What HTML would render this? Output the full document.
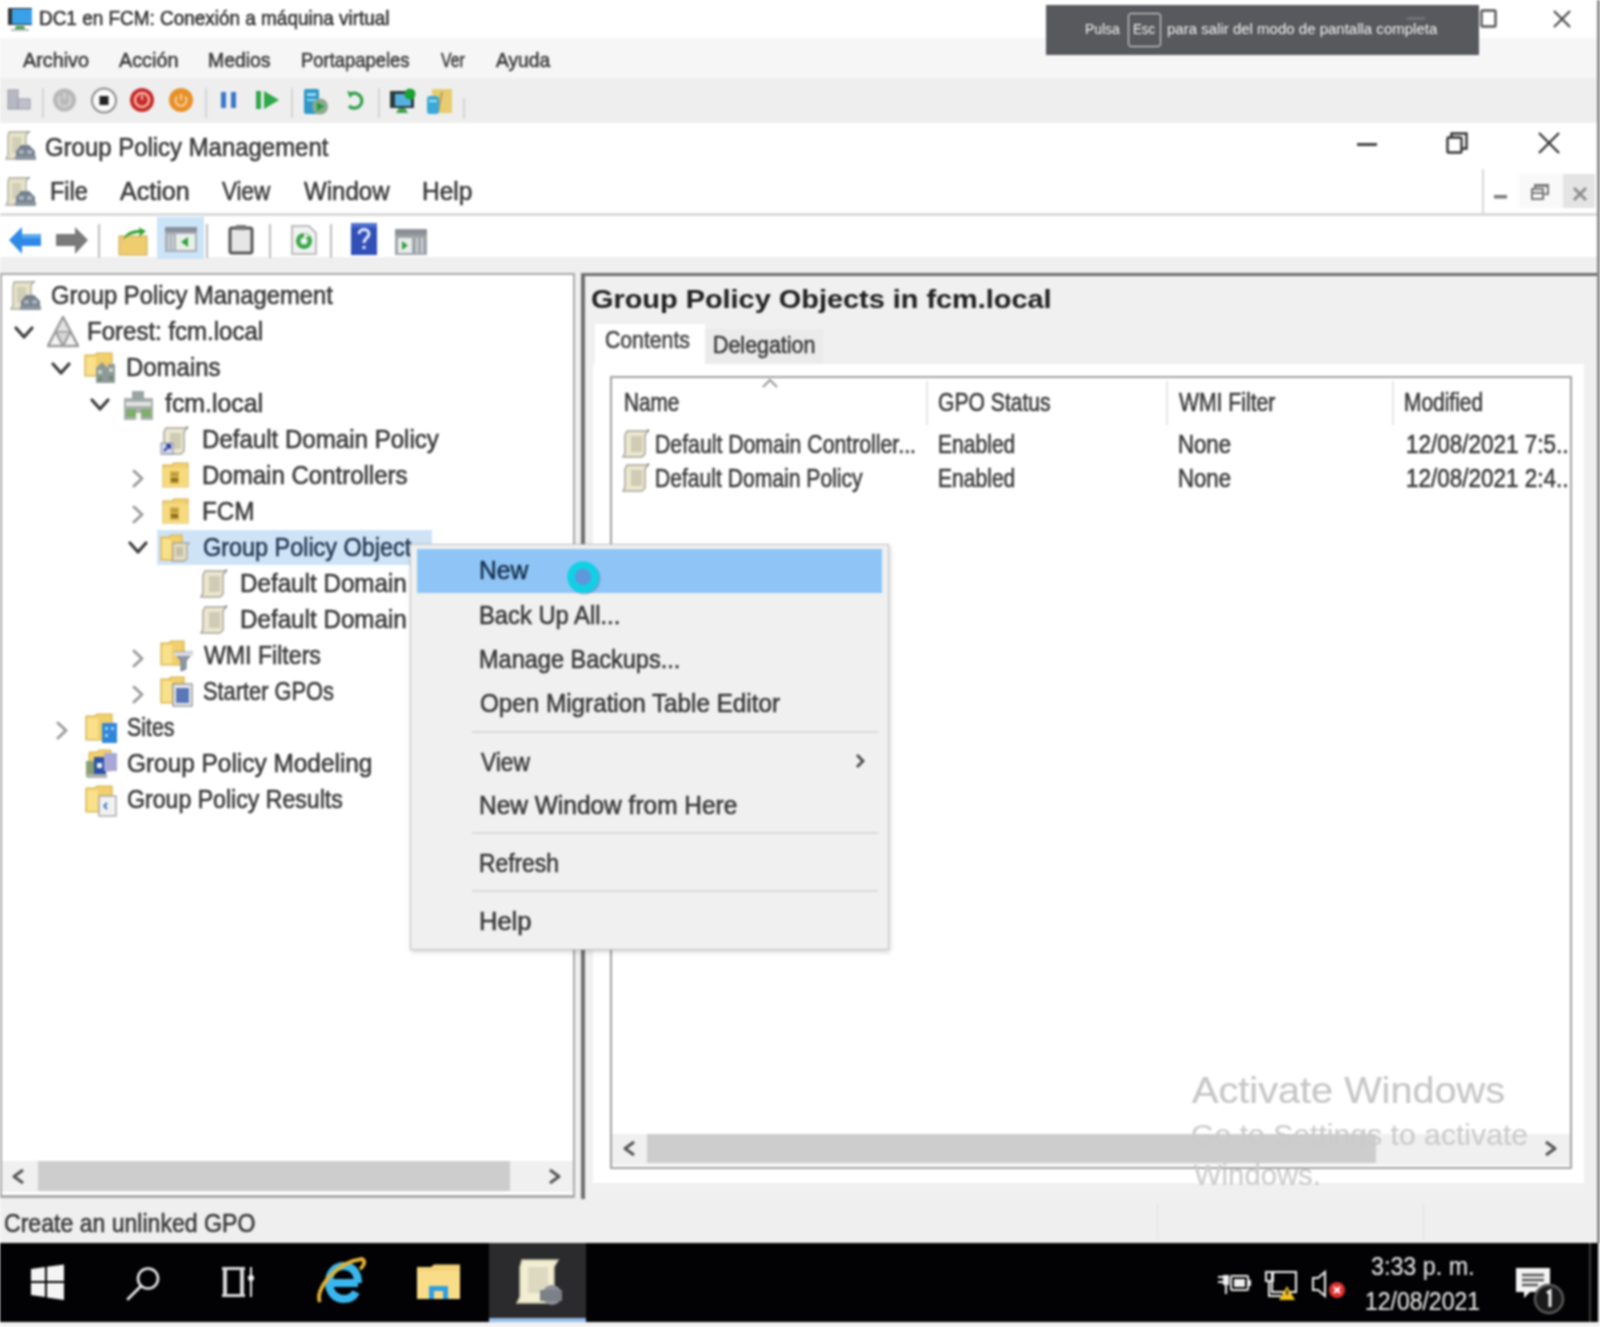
<!DOCTYPE html>
<html><head><meta charset="utf-8"><style>
html,body{margin:0;padding:0;}
body{width:1600px;height:1327px;position:relative;overflow:hidden;background:#fff;font-family:"Liberation Sans",sans-serif;}
.t{position:absolute;white-space:nowrap;line-height:1;transform-origin:0 0;-webkit-text-stroke:0.6px currentColor;}
#root{position:absolute;left:0;top:0;width:1600px;height:1327px;overflow:hidden;filter:blur(0.8px);}
.r{position:absolute;}
</style></head><body><div id="root">
<div class="r" style="left:0px;top:0px;width:1600px;height:38px;background:#ffffff;"></div>
<div class="r" style="left:0px;top:38px;width:1600px;height:40px;background:#f6f6f6;"></div>
<div class="r" style="left:0px;top:78px;width:1600px;height:45px;background:#eeeeee;"></div>
<div class="r" style="left:0px;top:123px;width:1600px;height:90px;background:#ffffff;"></div>
<div class="r" style="left:0px;top:213px;width:1600px;height:3px;background:#d9d9d9;"></div>
<div class="r" style="left:0px;top:216px;width:1600px;height:41px;background:#ffffff;"></div>
<div class="r" style="left:0px;top:257px;width:1600px;height:986px;background:#efefef;"></div>
<div class="r" style="left:0px;top:273px;width:575px;height:925px;background:#a8a8a8;"></div>
<div class="r" style="left:2px;top:275px;width:571px;height:920px;background:#ffffff;"></div>
<div class="r" style="left:2px;top:1161px;width:571px;height:31px;background:#f0f0f0;"></div>
<div class="r" style="left:38px;top:1161px;width:472px;height:30px;background:#cdcdcd;"></div>
<div class="r" style="left:581px;top:273px;width:1019px;height:926px;background:#6f6f6f;"></div>
<div class="r" style="left:585px;top:276px;width:1012px;height:923px;background:#f0f0f0;"></div>
<div class="r" style="left:593px;top:364px;width:991px;height:819px;background:#ffffff;"></div>
<div class="r" style="left:595px;top:324px;width:110px;height:42px;background:#ffffff;"></div>
<div class="r" style="left:705px;top:329px;width:118px;height:35px;background:#ebebeb;"></div>
<div class="r" style="left:610px;top:376px;width:962px;height:793px;background:#a0a0a0;"></div>
<div class="r" style="left:612px;top:378px;width:958px;height:789px;background:#ffffff;"></div>
<div class="r" style="left:612px;top:1134px;width:958px;height:31px;background:#f0f0f0;"></div>
<div class="r" style="left:647px;top:1134px;width:729px;height:29px;background:#cdcdcd;"></div>
<div class="r" style="left:926px;top:381px;width:2px;height:44px;background:#e5e5e5;"></div>
<div class="r" style="left:1166px;top:381px;width:2px;height:44px;background:#e5e5e5;"></div>
<div class="r" style="left:1392px;top:381px;width:2px;height:44px;background:#e5e5e5;"></div>
<div class="r" style="left:1157px;top:1203px;width:1px;height:37px;background:#e0e0e0;"></div>
<div class="r" style="left:1423px;top:1203px;width:1px;height:37px;background:#e0e0e0;"></div>
<div class="r" style="left:0px;top:1243px;width:1598px;height:79px;background:#020204;"></div>
<div class="r" style="left:1598px;top:1243px;width:2px;height:79px;background:#dcdcdc;"></div>
<div class="r" style="left:489px;top:1243px;width:97px;height:79px;background:#2b2b2d;"></div>
<div class="r" style="left:489px;top:1318px;width:97px;height:4px;background:#92bde6;"></div>
<div class="r" style="left:0px;top:1322px;width:1600px;height:5px;background:#f2f2f2;"></div>
<div class="r" style="left:1597px;top:0px;width:3px;height:1243px;background:#8a8a8a;"></div>
<div class="r" style="left:1589px;top:1243px;width:2px;height:79px;background:#3a3a3a;"></div>
<div class="r" style="left:157px;top:530px;width:275px;height:35px;background:#cfe3f6;"></div>
<svg class="r" style="left:7px;top:7px" width="26" height="25" viewBox="0 0 26 25"><rect x="1" y="1" width="24" height="17" fill="#2a2a2a"/><rect x="5" y="2" width="20" height="15" fill="#3aa0e8"/><rect x="1" y="1" width="4" height="17" fill="#333"/><path d="M9 19 H17 L19 24 H7 Z" fill="#3aa04a"/><rect x="4" y="22" width="18" height="2" fill="#b8b8b8"/></svg>
<svg class="r" style="left:7px;top:89px" width="25" height="21" viewBox="0 0 25 21"><rect x="1" y="1" width="10" height="19" fill="#b8b8c4" stroke="#9898a4"/><rect x="11" y="10" width="12" height="10" fill="#c0c0cc" stroke="#9898a4"/></svg><svg class="r" style="left:42px;top:88px" width="2" height="30" viewBox="0 0 2 30"><rect width="2" height="30" fill="#d4d4d4"/></svg><svg class="r" style="left:52px;top:88px" width="25" height="25" viewBox="0 0 25 25"><circle cx="12.5" cy="12" r="11.5" fill="#b9b9b9"/><path d="M8.5 8 A6 6 0 1 0 16.5 8" fill="none" stroke="#d8d8d8" stroke-width="2"/><path d="M12.5 5 V11" stroke="#d8d8d8" stroke-width="2"/></svg><svg class="r" style="left:90px;top:87px" width="28" height="28" viewBox="0 0 28 28"><circle cx="14" cy="13.5" r="12" fill="#fafafa" stroke="#8a8a8a" stroke-width="2"/><rect x="9.5" y="9" width="9" height="9" fill="#222"/></svg><svg class="r" style="left:129px;top:87px" width="26" height="26" viewBox="0 0 26 26"><circle cx="13" cy="13" r="12" fill="#c62a2a"/><circle cx="13" cy="13" r="7" fill="none" stroke="#f4b0a0" stroke-width="2.5"/><path d="M13 8 V13" stroke="#f4b0a0" stroke-width="2"/></svg><svg class="r" style="left:168px;top:87px" width="26" height="26" viewBox="0 0 26 26"><circle cx="13" cy="13" r="12" fill="#e8902a"/><path d="M9 9.5 A5.5 5.5 0 1 0 17 9.5" fill="none" stroke="#f8d090" stroke-width="2"/><path d="M13 7 V13" stroke="#f8d090" stroke-width="2"/></svg><svg class="r" style="left:205px;top:88px" width="2" height="30" viewBox="0 0 2 30"><rect width="2" height="30" fill="#d4d4d4"/></svg><svg class="r" style="left:220px;top:91px" width="18" height="18" viewBox="0 0 18 18"><rect x="1" y="1" width="5" height="16" fill="#3a78c8"/><rect x="11" y="1" width="5" height="16" fill="#3a78c8"/></svg><svg class="r" style="left:255px;top:89px" width="26" height="22" viewBox="0 0 26 22"><rect x="1" y="2" width="5" height="18" fill="#2ea84a"/><path d="M9 2 L24 11 L9 20 Z" fill="#2ea84a"/></svg><svg class="r" style="left:291px;top:88px" width="2" height="30" viewBox="0 0 2 30"><rect width="2" height="30" fill="#d4d4d4"/></svg><svg class="r" style="left:303px;top:88px" width="26" height="28" viewBox="0 0 26 28"><rect x="1" y="1" width="15" height="25" rx="2" fill="#2d98c8"/><rect x="4" y="5" width="9" height="3" fill="#9ad8f0"/><rect x="4" y="11" width="9" height="2" fill="#9ad8f0"/><circle cx="17" cy="18.5" r="8" fill="#8aa890"/><path d="M14 14 L21 18.5 L14 23 Z" fill="#1e9a3a"/></svg><svg class="r" style="left:345px;top:89px" width="20" height="22" viewBox="0 0 20 22"><path d="M6 5 A7.5 7.5 0 1 1 4 17" fill="none" stroke="#2ea04a" stroke-width="3.2"/><path d="M2 2 L9 4 L5 9 Z" fill="#2ea04a"/></svg><svg class="r" style="left:378px;top:88px" width="2" height="30" viewBox="0 0 2 30"><rect width="2" height="30" fill="#d4d4d4"/></svg><svg class="r" style="left:389px;top:88px" width="27" height="26" viewBox="0 0 27 26"><rect x="1" y="3" width="24" height="17" fill="#2b3a3a"/><rect x="6" y="6" width="16" height="12" fill="#58b0e0"/><path d="M10 20 H16 L19 25 H7 Z" fill="#40a050"/><circle cx="21" cy="6" r="5.5" fill="#18a030"/></svg><svg class="r" style="left:425px;top:88px" width="28" height="27" viewBox="0 0 28 27"><rect x="7" y="1" width="20" height="24" fill="#e8cc70"/><path d="M17 4 L13 24" stroke="#b0a060" stroke-width="2"/><rect x="2" y="8" width="12" height="18" rx="3" fill="#3aa8d8"/><rect x="4" y="12" width="8" height="2" fill="#a8e0f0"/></svg><svg class="r" style="left:463px;top:98px" width="2" height="21" viewBox="0 0 2 21"><rect width="2" height="21" fill="#d4d4d4"/></svg>
<svg class="r" style="left:1480px;top:9px" width="18" height="20" viewBox="0 0 18 20"><rect x="1.5" y="1.5" width="14" height="16" rx="1" fill="none" stroke="#555" stroke-width="2.4"/></svg><svg class="r" style="left:1552px;top:9px" width="20" height="20" viewBox="0 0 20 20"><path d="M2 2 L18 18 M18 2 L2 18" stroke="#444" stroke-width="2"/></svg>
<svg class="r" style="left:4px;top:131px" width="32" height="30" viewBox="0 0 32 30"><path d="M5 1 H24 L22 5 V24 L19 28 H2 L4 24 V5 Z" fill="#e6e3c8" stroke="#aaa89c" stroke-width="1.3"/><path d="M23 1 l3 -0.5" stroke="#999" stroke-width="2"/><rect x="8" y="6" width="9" height="16" fill="#d2cfb8"/><path d="M12 29 V20 L17 14 H25 L31 20 V29 Z" fill="#75818e"/><rect x="15" y="19" width="5" height="4" fill="#a9b3bd"/><rect x="23" y="19" width="5" height="4" fill="#a9b3bd"/><rect x="11" y="25" width="21" height="4" fill="#8c96a0"/></svg>
<svg class="r" style="left:4px;top:177px" width="32" height="30" viewBox="0 0 32 30"><path d="M5 1 H24 L22 5 V24 L19 28 H2 L4 24 V5 Z" fill="#e6e3c8" stroke="#aaa89c" stroke-width="1.3"/><path d="M23 1 l3 -0.5" stroke="#999" stroke-width="2"/><rect x="8" y="6" width="9" height="16" fill="#d2cfb8"/><path d="M12 29 V20 L17 14 H25 L31 20 V29 Z" fill="#75818e"/><rect x="15" y="19" width="5" height="4" fill="#a9b3bd"/><rect x="23" y="19" width="5" height="4" fill="#a9b3bd"/><rect x="11" y="25" width="21" height="4" fill="#8c96a0"/></svg>
<svg class="r" style="left:1356px;top:142px" width="22" height="5" viewBox="0 0 22 5"><rect x="1" y="1" width="20" height="3" fill="#444"/></svg><svg class="r" style="left:1446px;top:131px" width="23" height="24" viewBox="0 0 23 24"><rect x="1.5" y="6.5" width="14" height="15" rx="1" fill="none" stroke="#333" stroke-width="2.4"/><path d="M5.5 6.5 V2.5 H20.5 V17.5 H15.5" fill="none" stroke="#333" stroke-width="2.4"/></svg><svg class="r" style="left:1537px;top:131px" width="24" height="24" viewBox="0 0 24 24"><path d="M2 2 L22 22 M22 2 L2 22" stroke="#333" stroke-width="2.3"/></svg><svg class="r" style="left:1482px;top:169px" width="2" height="46" viewBox="0 0 2 46"><rect width="2" height="46" fill="#d8d8d8"/></svg><svg class="r" style="left:1519px;top:174px" width="44" height="34" viewBox="0 0 44 34"><rect width="44" height="34" fill="#f9f9f9"/></svg><svg class="r" style="left:1563px;top:174px" width="32" height="34" viewBox="0 0 32 34"><rect width="32" height="34" fill="#e4e4e4"/></svg><svg class="r" style="left:1494px;top:195px" width="13" height="4" viewBox="0 0 13 4"><rect x="0" y="0" width="13" height="3.5" fill="#7a7a7a"/></svg><svg class="r" style="left:1531px;top:183px" width="19" height="18" viewBox="0 0 19 18"><rect x="1" y="6" width="11" height="10" fill="none" stroke="#777" stroke-width="2"/><rect x="1" y="9" width="11" height="2" fill="#777"/><path d="M4 6 V2 H17 V11 H12" fill="none" stroke="#777" stroke-width="2"/><rect x="4" y="2" width="13" height="2" fill="#777"/></svg><svg class="r" style="left:1572px;top:186px" width="16" height="16" viewBox="0 0 16 16"><path d="M2 2 L14 14 M14 2 L2 14" stroke="#8a8a8a" stroke-width="2.8"/></svg>
<svg class="r" style="left:8px;top:225px" width="35" height="31" viewBox="0 0 35 31"><path d="M1 15 L14 2 V9 H33 V21 H14 V29 Z" fill="#2f8ae6"/><path d="M14 9 H33 V13 H14 Z" fill="#5aaaf0"/></svg><svg class="r" style="left:54px;top:225px" width="35" height="31" viewBox="0 0 35 31"><path d="M34 15 L21 2 V9 H2 V21 H21 V29 Z" fill="#7a7a7a"/></svg><svg class="r" style="left:98px;top:224px" width="2" height="34" viewBox="0 0 2 34"><rect width="2" height="34" fill="#bdbdbd"/></svg><svg class="r" style="left:118px;top:226px" width="31" height="31" viewBox="0 0 31 31"><rect x="1" y="10" width="28" height="19" fill="#f0cc70" stroke="#c8a850" stroke-width="1"/><path d="M5 14 C8 6 14 4 22 4 L20 1 L28 5 L21 11 L22 7 C15 7 10 9 5 14Z" fill="#30a030"/></svg><svg class="r" style="left:157px;top:217px" width="47" height="42" viewBox="0 0 47 42"><rect width="47" height="42" fill="#cce4f7"/><rect x="8" y="10" width="32" height="25" fill="#a8aeb8"/><rect x="8" y="10" width="32" height="5" fill="#8a909a"/><rect x="19" y="17" width="19" height="16" fill="#e8f0e8"/><path d="M31 20 L24 25 L31 30 Z" fill="#30a040"/><rect x="11" y="18" width="2" height="15" fill="#d0d4d8"/><rect x="15" y="18" width="2" height="15" fill="#d0d4d8"/></svg><svg class="r" style="left:206px;top:224px" width="2" height="34" viewBox="0 0 2 34"><rect width="2" height="34" fill="#bdbdbd"/></svg><svg class="r" style="left:228px;top:224px" width="27" height="31" viewBox="0 0 27 31"><rect x="2" y="4" width="22" height="25" rx="2" fill="#e6e6e6" stroke="#555" stroke-width="3"/><rect x="8" y="1" width="10" height="5" fill="#777"/></svg><svg class="r" style="left:269px;top:224px" width="2" height="34" viewBox="0 0 2 34"><rect width="2" height="34" fill="#bdbdbd"/></svg><svg class="r" style="left:290px;top:224px" width="28" height="32" viewBox="0 0 28 32"><path d="M2 2 H19 L26 9 V30 H2 Z" fill="#f2f2f2" stroke="#a8a8a8" stroke-width="1.5"/><circle cx="14" cy="17" r="8" fill="#3aa848"/><circle cx="14" cy="17" r="3.5" fill="#f2f2f2"/><path d="M14 9 L20 12 L14 14Z" fill="#f2f2f2"/></svg><svg class="r" style="left:330px;top:224px" width="2" height="34" viewBox="0 0 2 34"><rect width="2" height="34" fill="#bdbdbd"/></svg><svg class="r" style="left:350px;top:222px" width="28" height="34" viewBox="0 0 28 34"><rect x="1" y="1" width="26" height="32" fill="#3250b8"/><rect x="1" y="1" width="26" height="4" fill="#5070d0"/><path d="M9 12 C9 6 19 6 19 12 C19 16 14 16 14 21" fill="none" stroke="#e0e8ff" stroke-width="3"/><rect x="12.5" y="24" width="3" height="3" fill="#e0e8ff"/></svg><svg class="r" style="left:394px;top:228px" width="34" height="28" viewBox="0 0 34 28"><rect x="1" y="1" width="32" height="26" fill="#a0a4aa"/><rect x="1" y="1" width="32" height="6" fill="#8c9096"/><rect x="4" y="10" width="14" height="15" fill="#e8ece8"/><path d="M8 13 L14 17.5 L8 22 Z" fill="#30a040"/><rect x="22" y="10" width="2" height="15" fill="#d0d4d8"/><rect x="27" y="10" width="2" height="15" fill="#d0d4d8"/></svg>
<svg class="r" style="left:9px;top:281px" width="32" height="30" viewBox="0 0 32 30"><path d="M5 1 H24 L22 5 V24 L19 28 H2 L4 24 V5 Z" fill="#e6e3c8" stroke="#aaa89c" stroke-width="1.3"/><path d="M23 1 l3 -0.5" stroke="#999" stroke-width="2"/><rect x="8" y="6" width="9" height="16" fill="#d2cfb8"/><path d="M12 29 V20 L17 14 H25 L31 20 V29 Z" fill="#75818e"/><rect x="15" y="19" width="5" height="4" fill="#a9b3bd"/><rect x="23" y="19" width="5" height="4" fill="#a9b3bd"/><rect x="11" y="25" width="21" height="4" fill="#8c96a0"/></svg>
<svg class="r" style="left:13px;top:325px" width="22" height="16" viewBox="0 0 22 16"><path d="M3 3 L11.0 12 L19 3" fill="none" stroke="#3c3c3c" stroke-width="3.2" stroke-linecap="round" stroke-linejoin="round"/></svg>
<svg class="r" style="left:47px;top:315px" width="32" height="33" viewBox="0 0 32 33"><path d="M16 2 L31 31 H1 Z" fill="#f4f4f4" stroke="#9c9c9c" stroke-width="2.6" stroke-linejoin="round"/><path d="M8.5 16.5 H23.5 L16 31 Z" fill="#d6d6d6" stroke="#9c9c9c" stroke-width="2.2" stroke-linejoin="round"/><path d="M16 6 L22 16 H10 Z" fill="#e2e2e2"/></svg>
<svg class="r" style="left:50px;top:361px" width="22" height="16" viewBox="0 0 22 16"><path d="M3 3 L11.0 12 L19 3" fill="none" stroke="#3c3c3c" stroke-width="3.2" stroke-linecap="round" stroke-linejoin="round"/></svg>
<svg class="r" style="left:84px;top:352px" width="33" height="32" viewBox="0 0 33 32"><path d="M1 3 H11 L13 1 H28 V24 H1 Z" fill="#f1cf6a" stroke="#d2b050" stroke-width="1.2"/><rect x="2" y="5" width="10" height="18" fill="#f9e08a"/><path d="M12 31 V16 L18 10 L24 16 V12 H31 V31 Z" fill="#8e9a98"/><rect x="14" y="18" width="4" height="4" fill="#c8d0c8"/><rect x="25" y="16" width="4" height="4" fill="#c8d0c8"/><rect x="14" y="25" width="4" height="4" fill="#6d8c70"/><rect x="25" y="24" width="4" height="4" fill="#6d8c70"/></svg>
<svg class="r" style="left:89px;top:397px" width="22" height="16" viewBox="0 0 22 16"><path d="M3 3 L11.0 12 L19 3" fill="none" stroke="#3c3c3c" stroke-width="3.2" stroke-linecap="round" stroke-linejoin="round"/></svg>
<svg class="r" style="left:123px;top:389px" width="31" height="31" viewBox="0 0 31 31"><rect x="1" y="9" width="29" height="22" fill="#a9b0ae"/><rect x="9" y="2" width="12" height="9" fill="#9aa4a2"/><rect x="3" y="13" width="25" height="4" fill="#e1e6e2"/><rect x="3" y="20" width="10" height="8" fill="#7fae6b"/><rect x="18" y="20" width="10" height="8" fill="#7fae6b"/><rect x="13" y="24" width="5" height="7" fill="#f4f4f4"/></svg>
<svg class="r" style="left:160px;top:426px" width="30" height="30" viewBox="0 0 30 30"><path d="M6 2 H27 L24 6 V25 L21 28 H2 L4 24 V6 Z" fill="#ebe7cf" stroke="#a6a49a" stroke-width="1.5"/><rect x="10" y="7" width="11" height="16" fill="#cfcbb5"/><path d="M26 2 l2 -1" stroke="#888" stroke-width="2"/><rect x="1" y="17" width="12" height="11" fill="#d3d8e6" stroke="#8890a8" stroke-width="1"/><path d="M4 25 L10 19 M6 19 H10 V23" stroke="#2a3aa0" stroke-width="2" fill="none"/></svg>
<svg class="r" style="left:131px;top:468px" width="15" height="21" viewBox="0 0 15 21"><path d="M3 3 L11 10.5 L3 18" fill="none" stroke="#9c9c9c" stroke-width="3" stroke-linecap="round" stroke-linejoin="round"/></svg>
<svg class="r" style="left:162px;top:461px" width="28" height="27" viewBox="0 0 28 27"><path d="M1 4 H10 L12 2 H26 V26 H1 Z" fill="#f1d06e" stroke="#d0ad4f" stroke-width="1.2"/><rect x="1" y="7" width="25" height="19" fill="#f6da7e"/><rect x="8" y="10" width="9" height="13" fill="#d9b34a"/><rect x="9" y="17" width="7" height="4" fill="#8a7020"/><rect x="9" y="12" width="7" height="3" fill="#b79a3a"/></svg>
<svg class="r" style="left:131px;top:504px" width="15" height="21" viewBox="0 0 15 21"><path d="M3 3 L11 10.5 L3 18" fill="none" stroke="#9c9c9c" stroke-width="3" stroke-linecap="round" stroke-linejoin="round"/></svg>
<svg class="r" style="left:162px;top:497px" width="28" height="27" viewBox="0 0 28 27"><path d="M1 4 H10 L12 2 H26 V26 H1 Z" fill="#f1d06e" stroke="#d0ad4f" stroke-width="1.2"/><rect x="1" y="7" width="25" height="19" fill="#f6da7e"/><rect x="8" y="10" width="9" height="13" fill="#d9b34a"/><rect x="9" y="17" width="7" height="4" fill="#8a7020"/><rect x="9" y="12" width="7" height="3" fill="#b79a3a"/></svg>
<svg class="r" style="left:127px;top:540px" width="22" height="16" viewBox="0 0 22 16"><path d="M3 3 L11.0 12 L19 3" fill="none" stroke="#3c3c3c" stroke-width="3.2" stroke-linecap="round" stroke-linejoin="round"/></svg>
<svg class="r" style="left:160px;top:534px" width="31" height="28" viewBox="0 0 31 28"><path d="M1 3 H9 L11 1 H22 V26 H1 Z" fill="#f1cf6a" stroke="#d2b050" stroke-width="1.2"/><rect x="2" y="5" width="9" height="20" fill="#f9e08a"/><path d="M13 9 H29 L27 12 V25 L24 27 H12 L13 24 Z" fill="#e2dcc0" stroke="#a6a49a" stroke-width="1.3"/><rect x="16" y="13" width="7" height="9" fill="#c4bfa8"/></svg>
<svg class="r" style="left:199px;top:569px" width="30" height="30" viewBox="0 0 30 30"><path d="M6 2 H27 L24 6 V25 L21 28 H2 L4 24 V6 Z" fill="#ebe7cf" stroke="#a6a49a" stroke-width="1.5"/><rect x="10" y="7" width="11" height="16" fill="#cfcbb5"/><path d="M26 2 l2 -1" stroke="#888" stroke-width="2"/></svg>
<svg class="r" style="left:199px;top:605px" width="30" height="30" viewBox="0 0 30 30"><path d="M6 2 H27 L24 6 V25 L21 28 H2 L4 24 V6 Z" fill="#ebe7cf" stroke="#a6a49a" stroke-width="1.5"/><rect x="10" y="7" width="11" height="16" fill="#cfcbb5"/><path d="M26 2 l2 -1" stroke="#888" stroke-width="2"/></svg>
<svg class="r" style="left:131px;top:648px" width="15" height="21" viewBox="0 0 15 21"><path d="M3 3 L11 10.5 L3 18" fill="none" stroke="#9c9c9c" stroke-width="3" stroke-linecap="round" stroke-linejoin="round"/></svg>
<svg class="r" style="left:160px;top:640px" width="34" height="32" viewBox="0 0 34 32"><path d="M1 3 H9 L11 1 H24 V25 H1 Z" fill="#f1cf6a" stroke="#d2b050" stroke-width="1.2"/><rect x="2" y="5" width="10" height="19" fill="#f9e08a"/><path d="M14 12 H33 L26 21 V29 L21 31 V21 Z" fill="#8d98a8" stroke="#6c7585" stroke-width="1"/><rect x="14" y="12" width="19" height="4" fill="#d8dde4"/></svg>
<svg class="r" style="left:131px;top:684px" width="15" height="21" viewBox="0 0 15 21"><path d="M3 3 L11 10.5 L3 18" fill="none" stroke="#9c9c9c" stroke-width="3" stroke-linecap="round" stroke-linejoin="round"/></svg>
<svg class="r" style="left:160px;top:676px" width="33" height="31" viewBox="0 0 33 31"><path d="M1 3 H9 L11 1 H24 V27 H1 Z" fill="#f1cf6a" stroke="#d2b050" stroke-width="1.2"/><rect x="2" y="5" width="10" height="21" fill="#f9e08a"/><rect x="13" y="8" width="19" height="22" fill="#e8e8e8" stroke="#8a8f98" stroke-width="1.3"/><rect x="16" y="12" width="13" height="15" fill="#5a78b8"/></svg>
<svg class="r" style="left:55px;top:720px" width="15" height="21" viewBox="0 0 15 21"><path d="M3 3 L11 10.5 L3 18" fill="none" stroke="#9c9c9c" stroke-width="3" stroke-linecap="round" stroke-linejoin="round"/></svg>
<svg class="r" style="left:85px;top:713px" width="33" height="30" viewBox="0 0 33 30"><path d="M1 3 H10 L12 1 H27 V27 H1 Z" fill="#f1cf6a" stroke="#d2b050" stroke-width="1.2"/><rect x="2" y="5" width="11" height="21" fill="#f9e08a"/><rect x="17" y="10" width="15" height="20" fill="#2f86d8"/><rect x="20" y="14" width="3" height="3" fill="#9fd0f8"/><rect x="26" y="14" width="3" height="3" fill="#9fd0f8"/><rect x="20" y="21" width="3" height="3" fill="#9fd0f8"/></svg>
<svg class="r" style="left:85px;top:749px" width="33" height="30" viewBox="0 0 33 30"><path d="M4 3 H12 L14 1 H26 V22 H4 Z" fill="#f1cf6a" stroke="#d2b050" stroke-width="1"/><rect x="1" y="12" width="10" height="16" fill="#8aa070"/><rect x="9" y="8" width="12" height="20" fill="#2a52a8"/><rect x="19" y="4" width="13" height="18" fill="#a8a8d8"/><rect x="12" y="14" width="5" height="5" fill="#f0f0f0"/><rect x="2" y="25" width="20" height="4" fill="#b0b0b0"/></svg>
<svg class="r" style="left:85px;top:785px" width="33" height="32" viewBox="0 0 33 32"><path d="M1 3 H10 L12 1 H27 V27 H1 Z" fill="#f1cf6a" stroke="#d2b050" stroke-width="1.2"/><rect x="2" y="5" width="11" height="21" fill="#f9e08a"/><rect x="14" y="11" width="17" height="20" fill="#f2f2f2" stroke="#a0a0a8" stroke-width="1.3"/><path d="M19 21 L22 18 M19 21 L22 24" stroke="#4070c0" stroke-width="2"/></svg>
<svg class="r" style="left:10px;top:1167px" width="17" height="19" viewBox="0 0 17 19"><path d="M13 3 L4 9.5 L13 16" fill="none" stroke="#555" stroke-width="3" stroke-linejoin="round"/></svg>
<svg class="r" style="left:546px;top:1167px" width="17" height="19" viewBox="0 0 17 19"><path d="M4 3 L13 9.5 L4 16" fill="none" stroke="#555" stroke-width="3" stroke-linejoin="round"/></svg>
<svg class="r" style="left:621px;top:1139px" width="17" height="19" viewBox="0 0 17 19"><path d="M13 3 L4 9.5 L13 16" fill="none" stroke="#555" stroke-width="3" stroke-linejoin="round"/></svg>
<svg class="r" style="left:1542px;top:1139px" width="17" height="19" viewBox="0 0 17 19"><path d="M4 3 L13 9.5 L4 16" fill="none" stroke="#555" stroke-width="3" stroke-linejoin="round"/></svg>
<svg class="r" style="left:760px;top:377px" width="20" height="13" viewBox="0 0 20 13"><path d="M3 10 L10 3 L17 10" fill="none" stroke="#999" stroke-width="2"/></svg>
<svg class="r" style="left:621px;top:429px" width="30" height="30" viewBox="0 0 30 30"><path d="M6 2 H27 L24 6 V25 L21 28 H2 L4 24 V6 Z" fill="#ebe7cf" stroke="#a6a49a" stroke-width="1.5"/><rect x="10" y="7" width="11" height="16" fill="#cfcbb5"/><path d="M26 2 l2 -1" stroke="#888" stroke-width="2"/></svg>
<svg class="r" style="left:621px;top:463px" width="30" height="30" viewBox="0 0 30 30"><path d="M6 2 H27 L24 6 V25 L21 28 H2 L4 24 V6 Z" fill="#ebe7cf" stroke="#a6a49a" stroke-width="1.5"/><rect x="10" y="7" width="11" height="16" fill="#cfcbb5"/><path d="M26 2 l2 -1" stroke="#888" stroke-width="2"/></svg>
<svg class="r" style="left:30px;top:1264px" width="35" height="37" viewBox="0 0 35 37"><path d="M1 5 L15 3 V17 H1 Z M17 2.7 L34 0.5 V17 H17 Z M1 19 H15 V33 L1 31 Z M17 19 H34 V36 L17 33.5 Z" fill="#f4f4f4"/></svg><svg class="r" style="left:125px;top:1264px" width="38" height="38" viewBox="0 0 38 38"><circle cx="23" cy="14.5" r="10" fill="none" stroke="#e8e8e8" stroke-width="2.6"/><path d="M16 22 L3 35" stroke="#e8e8e8" stroke-width="2.8" stroke-linecap="round"/></svg><svg class="r" style="left:221px;top:1266px" width="36" height="33" viewBox="0 0 36 33"><rect x="1" y="1" width="23" height="3" fill="#d8d8d8"/><rect x="1" y="28" width="23" height="3" fill="#d8d8d8"/><rect x="2" y="4" width="4" height="24" fill="#d8d8d8"/><rect x="19" y="4" width="4" height="24" fill="#d8d8d8"/><rect x="29" y="1" width="2" height="30" fill="#ececec"/><circle cx="30" cy="12" r="3" fill="#f4f4f4"/></svg><svg class="r" style="left:314px;top:1254px" width="52" height="52" viewBox="0 0 52 52"><path d="M16 29 H44 M44 29 C44 17 37 12 30 12 C21 12 15 19 15 28 C15 38 21 45 30 45 C36 45 40 42 42 38" fill="none" stroke="#3ab6ee" stroke-width="8"/><path d="M6 48 C0 36 22 8 48 5 C52 7 50 12 46 15" fill="none" stroke="#e3b234" stroke-width="3.8"/></svg><svg class="r" style="left:416px;top:1264px" width="46" height="38" viewBox="0 0 46 38"><path d="M1 3 H15 L18 0.5 H44 V35 H1 Z" fill="#f3d37a"/><rect x="1" y="7" width="43" height="28" fill="#f8dc88"/><rect x="13" y="22" width="19" height="13" fill="#2f9fe0"/><rect x="18" y="27" width="9" height="8" fill="#f8dc88"/></svg><svg class="r" style="left:514px;top:1257px" width="50" height="52" viewBox="0 0 50 52"><path d="M8 3 H44 L40 10 V40 L36 46 H3 L6 40 V10 Z" fill="#f2eed4" stroke="#c8c4a8" stroke-width="1.5"/><rect x="14" y="10" width="20" height="26" fill="#ddd9c0"/><circle cx="38" cy="38" r="10" fill="#8c9098"/><rect x="26" y="33" width="22" height="11" fill="#7c8088"/></svg><svg class="r" style="left:1216px;top:1271px" width="36" height="25" viewBox="0 0 36 25"><path d="M2 6 H7 M2 11 H7" stroke="#eee" stroke-width="2"/><rect x="7" y="4" width="6" height="10" fill="#eee"/><path d="M10 14 V23" stroke="#eee" stroke-width="2"/><rect x="15" y="5" width="17" height="14" rx="1" fill="none" stroke="#eee" stroke-width="2"/><rect x="18" y="8" width="11" height="8" fill="#eee"/><rect x="32" y="9" width="3" height="6" fill="#eee"/></svg><svg class="r" style="left:1263px;top:1269px" width="36" height="33" viewBox="0 0 36 33"><rect x="9" y="3" width="24" height="20" fill="none" stroke="#eee" stroke-width="2"/><rect x="3" y="3" width="7" height="9" fill="none" stroke="#eee" stroke-width="2"/><path d="M6 12 V27 H18" fill="none" stroke="#eee" stroke-width="2"/><path d="M24 17 L32 31 H16 Z" fill="#f0c020"/><rect x="23.3" y="21" width="1.6" height="5" fill="#222"/></svg><svg class="r" style="left:1310px;top:1269px" width="40" height="32" viewBox="0 0 40 32"><path d="M3 9 H8 L15 3 V27 L8 21 H3 Z" fill="none" stroke="#eee" stroke-width="2"/><circle cx="27" cy="21" r="8" fill="#e03030"/><path d="M24 18 L30 24 M30 18 L24 24" stroke="#fff" stroke-width="2"/></svg><svg class="r" style="left:1514px;top:1266px" width="52" height="50" viewBox="0 0 52 50"><path d="M2 2 H36 V26 H16 L10 32 V26 H2 Z" fill="#f4f4f4"/><path d="M8 9 H30 M8 14 H30 M8 19 H24" stroke="#555" stroke-width="2.4"/><circle cx="35" cy="33" r="14" fill="#1a1a1a" stroke="#5a5a5a" stroke-width="2.5"/><path d="M33 27 L36 25 V41" stroke="#f0f0f0" stroke-width="3" fill="none"/></svg>
<div class="t" style="left:39.10px;top:7.45px;font-size:21px;font-weight:normal;color:#333;transform:scaleX(0.9018);">DC1 en FCM: Conexión a máquina virtual</div>
<div class="t" style="left:23.00px;top:49.35px;font-size:21px;font-weight:normal;color:#3c3c3c;transform:scaleX(0.9420);">Archivo</div>
<div class="t" style="left:119.00px;top:49.35px;font-size:21px;font-weight:normal;color:#3c3c3c;transform:scaleX(0.9435);">Acción</div>
<div class="t" style="left:208.08px;top:49.35px;font-size:21px;font-weight:normal;color:#3c3c3c;transform:scaleX(0.9242);">Medios</div>
<div class="t" style="left:301.12px;top:49.35px;font-size:21px;font-weight:normal;color:#3c3c3c;transform:scaleX(0.8770);">Portapapeles</div>
<div class="t" style="left:441.00px;top:49.35px;font-size:21px;font-weight:normal;color:#3c3c3c;transform:scaleX(0.7500);">Ver</div>
<div class="t" style="left:496.00px;top:49.35px;font-size:21px;font-weight:normal;color:#3c3c3c;transform:scaleX(0.9153);">Ayuda</div>
<div class="t" style="left:44.58px;top:133.50px;font-size:26px;font-weight:normal;color:#3a3a3a;transform:scaleX(0.9205);">Group Policy Management</div>
<div class="t" style="left:49.69px;top:178.40px;font-size:26px;font-weight:normal;color:#3a3a3a;transform:scaleX(0.9026);">File</div>
<div class="t" style="left:119.50px;top:178.40px;font-size:26px;font-weight:normal;color:#3a3a3a;transform:scaleX(0.9648);">Action</div>
<div class="t" style="left:221.60px;top:178.40px;font-size:26px;font-weight:normal;color:#3a3a3a;transform:scaleX(0.8643);">View</div>
<div class="t" style="left:304.00px;top:178.40px;font-size:26px;font-weight:normal;color:#3a3a3a;transform:scaleX(0.9247);">Window</div>
<div class="t" style="left:422.12px;top:178.40px;font-size:26px;font-weight:normal;color:#3a3a3a;transform:scaleX(0.9412);">Help</div>
<div class="t" style="left:50.77px;top:282.82px;font-size:25.5px;font-weight:normal;color:#3a3a3a;transform:scaleX(0.9338);">Group Policy Management</div>
<div class="t" style="left:87.32px;top:318.82px;font-size:25.5px;font-weight:normal;color:#3a3a3a;transform:scaleX(0.9418);">Forest: fcm.local</div>
<div class="t" style="left:125.62px;top:354.82px;font-size:25.5px;font-weight:normal;color:#3a3a3a;transform:scaleX(0.9394);">Domains</div>
<div class="t" style="left:165.00px;top:390.82px;font-size:25.5px;font-weight:normal;color:#3a3a3a;transform:scaleX(0.9750);">fcm.local</div>
<div class="t" style="left:201.71px;top:426.82px;font-size:25.5px;font-weight:normal;color:#3a3a3a;transform:scaleX(0.9442);">Default Domain Policy</div>
<div class="t" style="left:201.72px;top:462.82px;font-size:25.5px;font-weight:normal;color:#3a3a3a;transform:scaleX(0.9419);">Domain Controllers</div>
<div class="t" style="left:201.70px;top:498.82px;font-size:25.5px;font-weight:normal;color:#3a3a3a;transform:scaleX(0.9500);">FCM</div>
<div class="t" style="left:202.68px;top:534.83px;font-size:25.5px;font-weight:normal;color:#253a55;transform:scaleX(0.9181);">Group Policy Object</div>
<div class="t" style="left:239.90px;top:570.83px;font-size:25.5px;font-weight:normal;color:#3a3a3a;transform:scaleX(0.9491);">Default Domain</div>
<div class="t" style="left:239.90px;top:606.83px;font-size:25.5px;font-weight:normal;color:#3a3a3a;transform:scaleX(0.9491);">Default Domain</div>
<div class="t" style="left:203.60px;top:642.83px;font-size:25.5px;font-weight:normal;color:#3a3a3a;transform:scaleX(0.9070);">WMI Filters</div>
<div class="t" style="left:202.74px;top:678.83px;font-size:25.5px;font-weight:normal;color:#3a3a3a;transform:scaleX(0.8559);">Starter GPOs</div>
<div class="t" style="left:126.66px;top:714.83px;font-size:25.5px;font-weight:normal;color:#3a3a3a;transform:scaleX(0.8375);">Sites</div>
<div class="t" style="left:126.54px;top:750.83px;font-size:25.5px;font-weight:normal;color:#3a3a3a;transform:scaleX(0.9567);">Group Policy Modeling</div>
<div class="t" style="left:126.59px;top:786.83px;font-size:25.5px;font-weight:normal;color:#3a3a3a;transform:scaleX(0.9063);">Group Policy Results</div>
<div class="t" style="left:590.89px;top:286.40px;font-size:26px;font-weight:bold;color:#222;transform:scaleX(1.1109);-webkit-text-stroke:0.1px #222;">Group Policy Objects in fcm.local</div>
<div class="t" style="left:605.13px;top:328.18px;font-size:24.5px;font-weight:normal;color:#444;transform:scaleX(0.8660);">Contents</div>
<div class="t" style="left:713.25px;top:333.18px;font-size:24.5px;font-weight:normal;color:#3a3a3a;transform:scaleX(0.8739);">Delegation</div>
<div class="t" style="left:624.34px;top:390.05px;font-size:25px;font-weight:normal;color:#3c3c3c;transform:scaleX(0.8281);">Name</div>
<div class="t" style="left:937.66px;top:390.05px;font-size:25px;font-weight:normal;color:#3c3c3c;transform:scaleX(0.8447);">GPO Status</div>
<div class="t" style="left:1179.00px;top:390.05px;font-size:25px;font-weight:normal;color:#3c3c3c;transform:scaleX(0.8465);">WMI Filter</div>
<div class="t" style="left:1404.33px;top:390.05px;font-size:25px;font-weight:normal;color:#3c3c3c;transform:scaleX(0.8370);">Modified</div>
<div class="t" style="left:655.30px;top:432.25px;font-size:25px;font-weight:normal;color:#3c3c3c;transform:scaleX(0.8498);">Default Domain Controller...</div>
<div class="t" style="left:655.31px;top:466.05px;font-size:25px;font-weight:normal;color:#3c3c3c;transform:scaleX(0.8443);">Default Domain Policy</div>
<div class="t" style="left:938.31px;top:431.75px;font-size:25px;font-weight:normal;color:#3c3c3c;transform:scaleX(0.8427);">Enabled</div>
<div class="t" style="left:938.31px;top:465.75px;font-size:25px;font-weight:normal;color:#3c3c3c;transform:scaleX(0.8427);">Enabled</div>
<div class="t" style="left:1177.73px;top:431.75px;font-size:25px;font-weight:normal;color:#3c3c3c;transform:scaleX(0.8860);">None</div>
<div class="t" style="left:1177.73px;top:465.75px;font-size:25px;font-weight:normal;color:#3c3c3c;transform:scaleX(0.8860);">None</div>
<div class="t" style="left:1406.10px;top:431.75px;font-size:25px;font-weight:normal;color:#3c3c3c;transform:scaleX(0.8989);">12/08/2021 7:5..</div>
<div class="t" style="left:1406.10px;top:465.75px;font-size:25px;font-weight:normal;color:#3c3c3c;transform:scaleX(0.8989);">12/08/2021 2:4..</div>
<div class="t" style="left:1192.00px;top:1072.05px;font-size:37px;font-weight:normal;color:#c6c6c6;transform:scaleX(1.0722);-webkit-text-stroke:0.2px #c6c6c6;">Activate Windows</div>
<div class="t" style="left:1190.96px;top:1120.85px;font-size:29px;font-weight:normal;color:#cbcbcb;transform:scaleX(1.0404);-webkit-text-stroke:0.2px #cbcbcb;">Go to Settings to activate</div>
<div class="t" style="left:1193.60px;top:1160.85px;font-size:29px;font-weight:normal;color:#cbcbcb;transform:scaleX(1.0089);-webkit-text-stroke:0.2px #cbcbcb;">Windows.</div>
<div class="t" style="left:3.51px;top:1210.40px;font-size:26px;font-weight:normal;color:#3a3a3a;transform:scaleX(0.8872);">Create an unlinked GPO</div>
<div class="t" style="left:1371.00px;top:1254.25px;font-size:25px;font-weight:normal;color:#e0e0e0;transform:scaleX(0.9312);-webkit-text-stroke:0.2px #e0e0e0;">3:33 p. m.</div>
<div class="t" style="left:1365.08px;top:1289.25px;font-size:25px;font-weight:normal;color:#e0e0e0;transform:scaleX(0.9187);-webkit-text-stroke:0.2px #e0e0e0;">12/08/2021</div>
<div class="r" style="left:410px;top:544px;width:479px;height:406px;background:#c4c4c4;box-shadow:1px 2px 5px rgba(0,0,0,0.18)"></div>
<div class="r" style="left:411px;top:545px;width:477px;height:404px;background:#f0f0f0;"></div>
<div class="r" style="left:417px;top:549px;width:465px;height:44px;background:#8ec5f6;"></div>
<div class="r" style="left:472px;top:731px;width:406px;height:2px;background:#dadada;"></div>
<div class="r" style="left:472px;top:832px;width:406px;height:2px;background:#dadada;"></div>
<div class="r" style="left:472px;top:890px;width:406px;height:2px;background:#dadada;"></div>
<div class="t" style="left:479.03px;top:558.25px;font-size:25px;font-weight:normal;color:#1b3350;transform:scaleX(0.9857);">New</div>
<div class="t" style="left:479.10px;top:602.75px;font-size:25px;font-weight:normal;color:#3a3a3a;transform:scaleX(0.9503);">Back Up All...</div>
<div class="t" style="left:479.12px;top:646.75px;font-size:25px;font-weight:normal;color:#3a3a3a;transform:scaleX(0.9405);">Manage Backups...</div>
<div class="t" style="left:480.03px;top:690.75px;font-size:25px;font-weight:normal;color:#3a3a3a;transform:scaleX(0.9695);">Open Migration Table Editor</div>
<div class="t" style="left:481.00px;top:749.65px;font-size:25px;font-weight:normal;color:#3a3a3a;transform:scaleX(0.9091);">View</div>
<div class="t" style="left:479.04px;top:793.25px;font-size:25px;font-weight:normal;color:#3a3a3a;transform:scaleX(0.9789);">New Window from Here</div>
<div class="t" style="left:479.18px;top:851.25px;font-size:25px;font-weight:normal;color:#3a3a3a;transform:scaleX(0.9118);">Refresh</div>
<div class="t" style="left:478.96px;top:908.95px;font-size:25px;font-weight:normal;color:#3a3a3a;transform:scaleX(1.0204);">Help</div>
<svg class="r" style="left:850px;top:750px;" width="20" height="22" viewBox="0 0 20 22"><path d="M7 5 L13 11 L7 17" fill="none" stroke="#4a4a4a" stroke-width="2.8"/></svg>
<svg class="r" style="left:563px;top:557px;" width="42" height="42" viewBox="0 0 42 42"><circle cx="21.5" cy="21.5" r="12.5" fill="none" stroke="#2a7fb0" stroke-opacity="0.45" stroke-width="7"/><circle cx="20" cy="20" r="12" fill="#5f97dc" stroke="#12d0e4" stroke-width="7.5"/></svg>
<div class="r" style="left:1046px;top:5px;width:433px;height:50px;background:#58595c;"></div>
<div class="r" style="left:1407px;top:17px;width:18px;height:3px;background:#707174;"></div>
<div class="r" style="left:1128px;top:13px;width:33px;height:34px;background:transparent;border:1.5px solid #e6e6e6;border-radius:3px;box-sizing:border-box"></div>
<div class="t" style="left:1085.40px;top:21.43px;font-size:15.5px;font-weight:normal;color:#f4f4f4;transform:scaleX(0.8974);-webkit-text-stroke:0;">Pulsa</div>
<div class="t" style="left:1133.14px;top:21.43px;font-size:15.5px;font-weight:normal;color:#f4f4f4;transform:scaleX(0.8560);-webkit-text-stroke:0;">Esc</div>
<div class="t" style="left:1167.43px;top:21.43px;font-size:15.5px;font-weight:normal;color:#f4f4f4;transform:scaleX(0.9681);-webkit-text-stroke:0;">para salir del modo de pantalla completa</div>
</div></body></html>
